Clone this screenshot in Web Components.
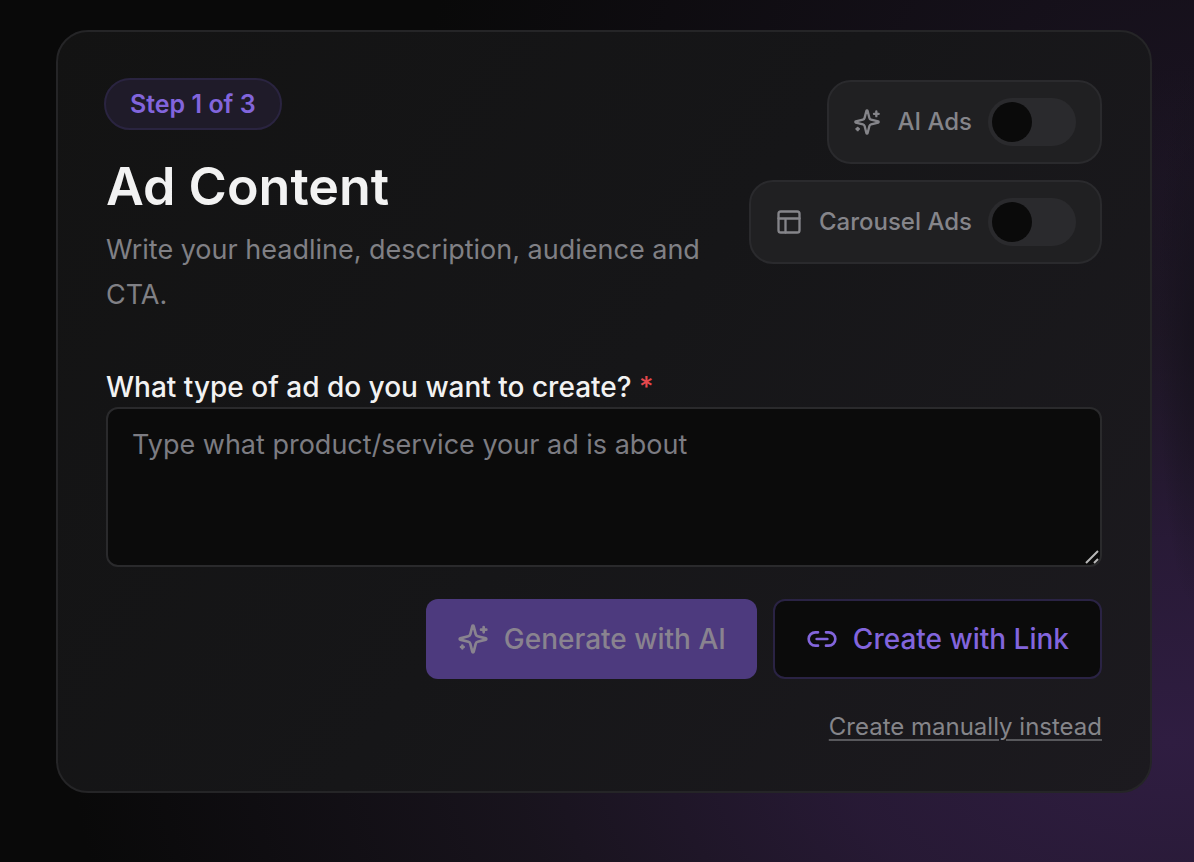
<!DOCTYPE html>
<html lang="en">
<head>
<meta charset="utf-8">
<meta name="viewport" content="width=device-width, initial-scale=1">
<title>Ad Content</title>
<style>
  body {
    margin: 0;
    min-height: 100vh;
    font-family: Inter, "Liberation Sans", sans-serif;
    color: #f2f2f2;
    background:
      radial-gradient(ellipse 36px 280px at 100% 38%, rgba(22, 18, 28, .8), transparent),
      radial-gradient(ellipse 92% 78% at 98% 86%, #2f1d41, rgba(44, 28, 60, .85) 30%, rgba(34, 26, 42, .6) 60%, transparent),
      radial-gradient(ellipse 65% 90% at 100% 20%, #1a1321, transparent),
      #090909;
  }
</style>
</head>
<body>
<ad-page></ad-page>
<script>
const icons = {
  sparkles: '<path d="M9.937 15.5A2 2 0 0 0 8.5 14.063l-6.135-1.582a.5.5 0 0 1 0-.962L8.5 9.936A2 2 0 0 0 9.937 8.5l1.582-6.135a.5.5 0 0 1 .963 0L14.063 8.5A2 2 0 0 0 15.5 9.937l6.135 1.581a.5.5 0 0 1 0 .964L15.5 14.063a2 2 0 0 0-1.437 1.437l-1.582 6.135a.5.5 0 0 1-.963 0z"/><path d="M20 3v4M22 5h-4M4 17v2M5 18H3"/>',
  layout: '<rect x="3" y="3" width="18" height="18" rx="2"/><path d="M3 9h18M9 21V9"/>',
  link: '<path d="M9 17H7A5 5 0 0 1 7 7h2M15 7h2a5 5 0 1 1 0 10h-2M8 12h8"/>'
};

function define(name, render) {
  customElements.define(name, class extends HTMLElement {
    connectedCallback() {
      if (this.shadowRoot) return;
      const template = document.createElement('template');
      template.innerHTML = render(this);
      this.attachShadow({ mode: 'open' }).append(template.content.cloneNode(true));
    }
  });
}

define('ui-icon', el => `
  <style>
    :host { display: block; flex: none; width: var(--icon-size, 28px); height: var(--icon-size, 28px); }
    svg { display: block; width: 100%; height: 100%; }
  </style>
  <svg viewBox="0 0 24 24" fill="none" stroke="currentColor" stroke-width="2" stroke-linecap="round" stroke-linejoin="round" aria-hidden="true">${icons[el.getAttribute('name')]}</svg>`);

define('step-badge', () => `
  <style>
    :host {
      display: inline-block; box-sizing: border-box; padding: 8px 24px;
      border: 2px solid #2a2440; border-radius: 26px; background: #1f1b29;
      color: #8265dc; font-size: 25px; line-height: 32px; font-weight: 600;
    }
  </style><slot></slot>`);

define('ad-toggle', el => `
  <style>
    :host { display: block; }
    label {
      display: flex; align-items: center; gap: 16px; padding: 16px 24px;
      border: 2px solid #2a2a2d; border-radius: 24px; background: #202022;
      color: #85858a; font-size: 24px; line-height: 32px; font-weight: 500; white-space: nowrap;
    }
    input {
      appearance: none; display: flex; box-sizing: border-box; margin: 0; padding: 4px;
      width: 88px; height: 48px; border-radius: 24px; background: #2a2a2d;
    }
    input::before { content: ""; width: 40px; height: 40px; border-radius: 50%; background: #0a0a0a; }
    input:checked { justify-content: flex-end; background: #7c5cdb; }
  </style>
  <label><ui-icon name="${el.getAttribute('icon')}"></ui-icon><slot></slot><input type="checkbox" role="switch" aria-label="${el.textContent}"></label>`);

define('ad-header', () => `
  <style>
    :host { display: flex; align-items: flex-start; justify-content: space-between; gap: 32px; }
    .intro { flex: 1; min-width: 0; }
    step-badge { margin: -2px 0 0 -2px; }
    h1 { margin: 24px 0 0; font-size: 52px; line-height: 66px; font-weight: 600; }
    p { margin: 7px 0 0; font-size: 27px; line-height: 45px; color: #808085; }
    .toggles { display: flex; flex-direction: column; align-items: flex-end; gap: 16px; }
  </style>
  <div class="intro">
    <step-badge>Step 1 of 3</step-badge>
    <h1>Ad Content</h1>
    <p>Write your headline, description, audience and CTA.</p>
  </div>
  <div class="toggles">
    <ad-toggle icon="sparkles">AI Ads</ad-toggle>
    <ad-toggle icon="layout">Carousel Ads</ad-toggle>
  </div>`);

define('ad-prompt', () => `
  <style>
    :host { display: block; }
    label { display: block; font-size: 28px; line-height: 40px; font-weight: 500; }
    label span { color: #e5484d; }
    .field { position: relative; }
    textarea {
      display: block; box-sizing: border-box; width: 100%; height: 160px; padding: 16px 24px;
      border: 2px solid #2a2a2c; border-radius: 12px; background: #0b0b0b;
      color: #f2f2f2; font: inherit; font-size: 27px; line-height: 40px; resize: none;
    }
    textarea::placeholder { color: #7c7c82; }
    svg { position: absolute; right: 2px; bottom: 2px; width: 16px; height: 16px; pointer-events: none; }
  </style>
  <label for="prompt">What type of ad do you want to create? <span>*</span></label>
  <div class="field">
    <textarea id="prompt" required placeholder="Type what product/service your ad is about"></textarea>
    <svg viewBox="0 0 16 16" stroke="#b8b8b8" stroke-width="2" aria-hidden="true"><path d="M2 14 14 2M10 14l4-4"/></svg>
  </div>`);

define('ad-button', el => `
  <style>
    :host { display: block; --icon-size: 32px; }
    button {
      display: flex; align-items: center; gap: 15px; box-sizing: border-box; height: 80px; padding: 0 31px;
      border: 0 solid #2a2344; border-radius: 12px; background: #4d3a7e; color: #89838f;
      font: inherit; font-size: 28px; line-height: 40px; font-weight: 500; white-space: nowrap;
    }
    button.outline { border-width: 2px; background: #0b0b0b; color: #8265dc; }
  </style>
  <button type="button" class="${el.getAttribute('variant')}" ${el.hasAttribute('disabled') ? 'disabled' : ''}>
    <ui-icon name="${el.getAttribute('icon')}"></ui-icon><slot></slot>
  </button>`);

define('ad-actions', () => `
  <style>
    :host { display: flex; flex-direction: column; align-items: flex-end; gap: 32px; }
    .row { display: flex; flex-wrap: wrap; justify-content: flex-end; gap: 16px; }
    a {
      color: #85858a; font-size: 24px; line-height: 32px;
      text-decoration-color: #58585c; text-decoration-thickness: 2px; text-underline-offset: 4px;
    }
  </style>
  <div class="row">
    <ad-button variant="solid" icon="sparkles" disabled>Generate with AI</ad-button>
    <ad-button variant="outline" icon="link">Create with Link</ad-button>
  </div>
  <a href="#manual">Create manually instead</a>`);

define('ad-card', () => `
  <style>
    :host {
      display: block; padding: 48px; border: 2px solid #252527; border-radius: 32px;
      background: linear-gradient(125deg, #131313, #161618 50%, #1c1a1f);
    }
  </style><slot></slot>`);

define('ad-page', () => `
  <style>
    :host { display: block; padding: 30px 42px 68px 56px; }
    form { margin: 0; }
    ad-prompt { margin-top: 50px; }
    ad-actions { margin-top: 32px; }
  </style>
  <ad-card>
    <form>
      <ad-header></ad-header>
      <ad-prompt></ad-prompt>
      <ad-actions></ad-actions>
    </form>
  </ad-card>`);
</script>
</body>
</html>
